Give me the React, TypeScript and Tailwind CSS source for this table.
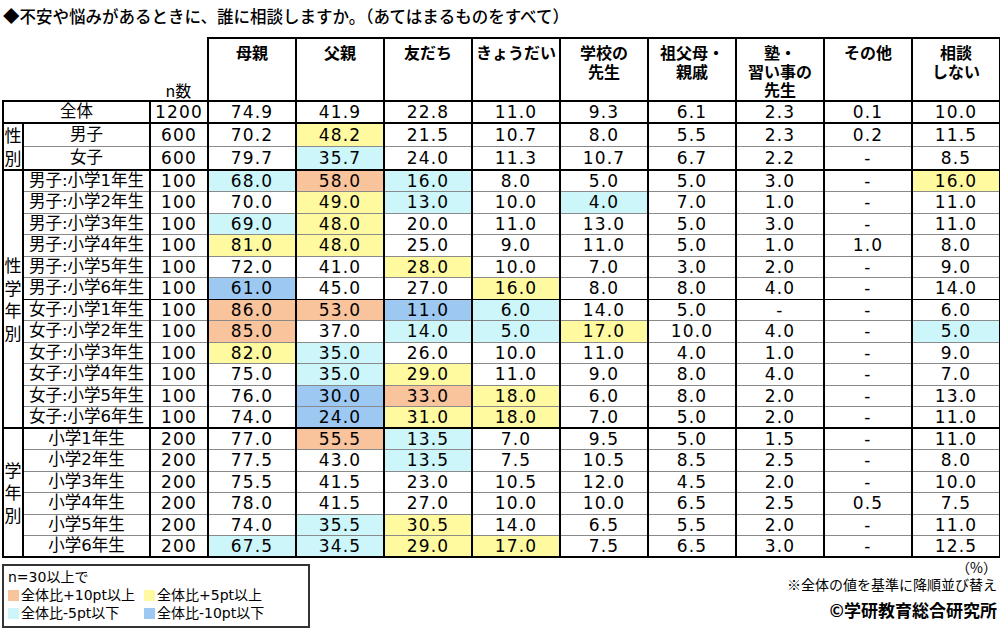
const heads = [
  ['母親'],
  ['父親'],
  ['友だち'],
  ['きょうだい'],
  ['学校の', '先生'],
  ['祖父母・', '親戚'],
  ['塾・', '習い事の', '先生'],
  ['その他'],
  ['相談', 'しない'],
];

type Row = { label: string; n: string; vals: string[]; cut?: boolean };

// value + colour code: O = +10pt, Y = +5pt, C = -5pt, B = -10pt
const sections: { side: string[] | null; rows: Row[] }[] = [
  {
    side: null,
    rows: [{ label: '全体', n: '1200', vals: ['74.9', '41.9', '22.8', '11.0', '9.3', '6.1', '2.3', '0.1', '10.0'] }],
  },
  {
    side: ['性', '別'],
    rows: [
      { label: '男子', n: '600', vals: ['70.2', '48.2Y', '21.5', '10.7', '8.0', '5.5', '2.3', '0.2', '11.5'] },
      { label: '女子', n: '600', vals: ['79.7', '35.7C', '24.0', '11.3', '10.7', '6.7', '2.2', '-', '8.5'] },
    ],
  },
  {
    side: ['性', '学', '年', '別'],
    rows: [
      { label: '男子:小学1年生', n: '100', vals: ['68.0C', '58.0O', '16.0C', '8.0', '5.0', '5.0', '3.0', '-', '16.0Y'] },
      { label: '男子:小学2年生', n: '100', vals: ['70.0', '49.0Y', '13.0C', '10.0', '4.0C', '7.0', '1.0', '-', '11.0'] },
      { label: '男子:小学3年生', n: '100', vals: ['69.0C', '48.0Y', '20.0', '11.0', '13.0', '5.0', '3.0', '-', '11.0'] },
      { label: '男子:小学4年生', n: '100', vals: ['81.0Y', '48.0Y', '25.0', '9.0', '11.0', '5.0', '1.0', '1.0', '8.0'] },
      { label: '男子:小学5年生', n: '100', vals: ['72.0', '41.0', '28.0Y', '10.0', '7.0', '3.0', '2.0', '-', '9.0'] },
      { label: '男子:小学6年生', n: '100', vals: ['61.0B', '45.0', '27.0', '16.0Y', '8.0', '8.0', '4.0', '-', '14.0'] },
      { label: '女子:小学1年生', n: '100', cut: true, vals: ['86.0O', '53.0O', '11.0B', '6.0C', '14.0', '5.0', '-', '-', '6.0'] },
      { label: '女子:小学2年生', n: '100', vals: ['85.0O', '37.0', '14.0C', '5.0C', '17.0Y', '10.0', '4.0', '-', '5.0C'] },
      { label: '女子:小学3年生', n: '100', vals: ['82.0Y', '35.0C', '26.0', '10.0', '11.0', '4.0', '1.0', '-', '9.0'] },
      { label: '女子:小学4年生', n: '100', vals: ['75.0', '35.0C', '29.0Y', '11.0', '9.0', '8.0', '4.0', '-', '7.0'] },
      { label: '女子:小学5年生', n: '100', vals: ['76.0', '30.0B', '33.0O', '18.0Y', '6.0', '8.0', '2.0', '-', '13.0'] },
      { label: '女子:小学6年生', n: '100', vals: ['74.0', '24.0B', '31.0Y', '18.0Y', '7.0', '5.0', '2.0', '-', '11.0'] },
    ],
  },
  {
    side: ['学', '年', '別'],
    rows: [
      { label: '小学1年生', n: '200', vals: ['77.0', '55.5O', '13.5C', '7.0', '9.5', '5.0', '1.5', '-', '11.0'] },
      { label: '小学2年生', n: '200', vals: ['77.5', '43.0', '13.5C', '7.5', '10.5', '8.5', '2.5', '-', '8.0'] },
      { label: '小学3年生', n: '200', vals: ['75.5', '41.5', '23.0', '10.5', '12.0', '4.5', '2.0', '-', '10.0'] },
      { label: '小学4年生', n: '200', vals: ['78.0', '41.5', '27.0', '10.0', '10.0', '6.5', '2.5', '0.5', '7.5'] },
      { label: '小学5年生', n: '200', vals: ['74.0', '35.5C', '30.5Y', '14.0', '6.5', '5.5', '2.0', '-', '11.0'] },
      { label: '小学6年生', n: '200', vals: ['67.5C', '34.5C', '29.0Y', '17.0Y', '7.5', '6.5', '3.0', '-', '12.5'] },
    ],
  },
];

const fills: Record<string, string> = {
  O: 'bg-[#f9c39c]',
  Y: 'bg-[#fff9a0]',
  C: 'bg-[#cdf6fa]',
  B: 'bg-[#9cc8f2]',
};

function splitVal(v: string) {
  const last = v.slice(-1);
  if (fills[last]) return { text: v.slice(0, -1), fill: fills[last] };
  return { text: v, fill: '' };
}

export default function App() {
  return (
    <div className="w-[1000px] h-[630px] bg-white text-black pl-[2px] font-['DejaVu_Sans','Noto_Sans_CJK_JP',sans-serif] overflow-hidden">
      <div className="h-[37px] pt-[6px] pl-[1px] text-[16.5px] leading-[20px] font-medium font-['Noto_Sans_CJK_JP',sans-serif]">
        ◆不安や悩みがあるときに、誰に相談しますか。（あてはまるものをすべて）
      </div>

      <table className="table-fixed border-collapse w-[997px]">
        <colgroup>
          <col className="w-[20px]" />
          <col className="w-[127px]" />
          <col className="w-[58px]" />
          {heads.map((_, i) => (
            <col key={i} className="w-[88px]" />
          ))}
        </colgroup>
        <thead>
          <tr className="h-[63px]">
            <td colSpan={2} className="p-0" />
            <td className="p-0 align-bottom text-center text-[16px] leading-[18px] pb-[1px] font-['Noto_Sans_CJK_JP',sans-serif]">
              n数
            </td>
            {heads.map((h, i) => (
              <th
                key={i}
                className="p-0 pt-[4px] align-top border-2 border-black text-center font-bold text-[16px] leading-[18.5px] font-['Noto_Sans_CJK_JP',sans-serif]"
              >
                {h.map((line) => (
                  <div key={line} className="h-[18.5px]">
                    {line}
                  </div>
                ))}
              </th>
            ))}
          </tr>
        </thead>
        <tbody>
          {sections.map((sec, si) =>
            sec.rows.map((r, ri) => {
              const first = ri === 0;
              const lastRow = si === sections.length - 1 && ri === sec.rows.length - 1;
              const top = first
                ? 'border-t-2 border-t-black'
                : r.cut
                  ? 'border-t border-t-black'
                  : 'border-t border-t-[#8a8a8a]';
              const bottom = lastRow ? 'border-b-2 border-b-black' : '';
              return (
                <tr key={r.label} className="h-[21.5px]">
                  {sec.side === null ? null : first ? (
                    <td
                      rowSpan={sec.rows.length}
                      className="p-0 border-2 border-black text-center align-middle text-[17px] leading-[22.5px] font-['Noto_Sans_CJK_JP',sans-serif]"
                    >
                      {sec.side.map((c, k) => (
                        <div key={k}>{c}</div>
                      ))}
                    </td>
                  ) : null}
                  <td
                    colSpan={sec.side === null ? 2 : 1}
                    className={`p-0 border-x-2 border-x-black ${top} ${bottom} text-center text-[16.5px] leading-[20px] whitespace-nowrap`}
                  >
                    {r.label}
                  </td>
                  <td
                    className={`p-0 border-x-2 border-x-black ${top} ${bottom} text-center text-[17px] leading-[20px] tracking-[1.2px]`}
                  >
                    {r.n}
                  </td>
                  {r.vals.map((v, k) => {
                    const { text, fill } = splitVal(v);
                    return (
                      <td
                        key={k}
                        className={`p-0 border-x-2 border-x-black ${top} ${bottom} ${fill} text-center text-[17px] leading-[20px] tracking-[1.2px]`}
                      >
                        {text}
                      </td>
                    );
                  })}
                </tr>
              );
            })
          )}
        </tbody>
      </table>

      <div className="flex justify-between items-start pr-[3px]">
        <div className="mt-[6px] w-[308px] h-[64px] border-2 border-[#333] px-[4px] pt-[2px] text-[14px] leading-[18px]">
          <div>n=30以上で</div>
          <div className="grid grid-cols-[136px_1fr]">
            <div className="flex items-center gap-[2px]">
              <span className="inline-block w-[11px] h-[11px] bg-[#f9c39c]" />
              <span>全体比+10pt以上</span>
            </div>
            <div className="flex items-center gap-[2px]">
              <span className="inline-block w-[11px] h-[11px] bg-[#fff9a0]" />
              <span>全体比+5pt以上</span>
            </div>
            <div className="flex items-center gap-[2px]">
              <span className="inline-block w-[11px] h-[11px] bg-[#cdf6fa]" />
              <span>全体比-5pt以下</span>
            </div>
            <div className="flex items-center gap-[2px]">
              <span className="inline-block w-[11px] h-[11px] bg-[#9cc8f2]" />
              <span>全体比-10pt以下</span>
            </div>
          </div>
        </div>
        <div className="flex flex-col items-end pt-[1px] font-['Noto_Sans_CJK_JP',sans-serif]">
          <div className="text-[14px] leading-[17px]">（%）</div>
          <div className="text-[14px] leading-[17px]">※全体の値を基準に降順並び替え</div>
          <div className="mt-[6px] text-[17px] leading-[22px] font-bold">©学研教育総合研究所</div>
        </div>
      </div>
    </div>
  );
}
